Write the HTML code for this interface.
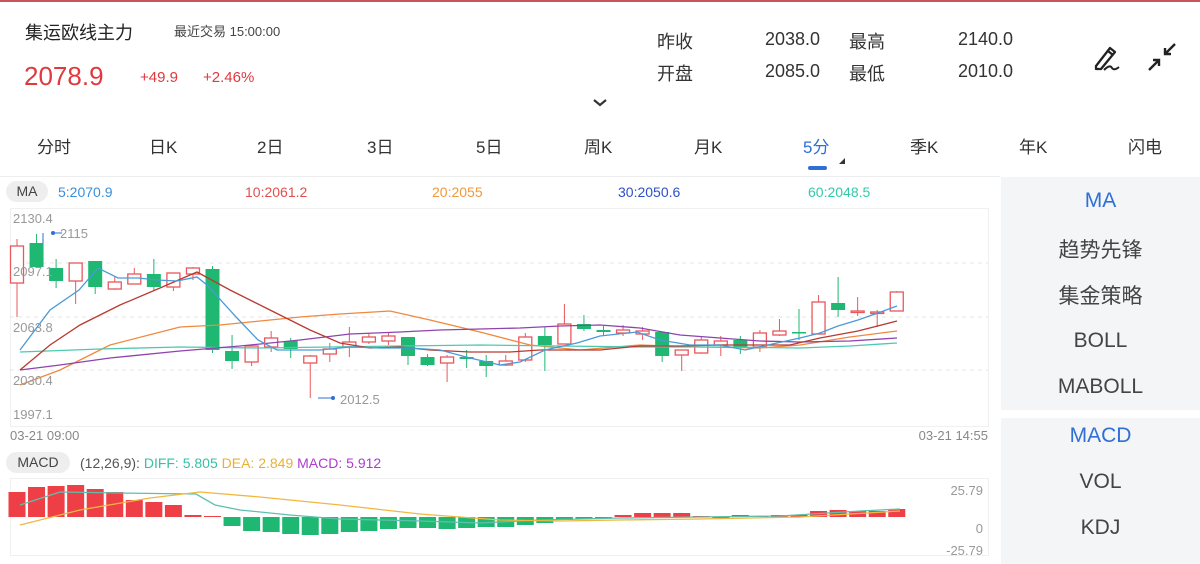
<!DOCTYPE html>
<html><head><meta charset="utf-8">
<style>
*{margin:0;padding:0;box-sizing:border-box}
body{width:1200px;height:564px;background:#fff;font-family:"Liberation Sans","Noto Sans CJK SC",sans-serif;position:relative;overflow:hidden;color:#333}
.a{position:absolute;white-space:nowrap}
.tab{position:absolute;top:133px;font-size:17px;color:#333}
.sb{position:absolute;left:1001px;width:199px;background:#f4f5f7}
.sb div{position:absolute;width:100%;text-align:center;font-size:21px;color:#444}
</style></head><body>
<div class="a" style="left:0;top:0;width:1200px;height:2px;background:#c9545a"></div>
<div class="a" style="left:25px;top:19px;font-size:18px;color:#222">集运欧线主力</div>
<div class="a" style="left:174px;top:21px;font-size:13px;color:#444">最近交易 15:00:00</div>
<div class="a" style="left:24px;top:61px;font-size:26px;color:#e0393e">2078.9</div>
<div class="a" style="left:140px;top:69px;font-size:15px;color:#e0393e">+49.9</div>
<div class="a" style="left:203px;top:69px;font-size:15px;color:#e0393e">+2.46%</div>
<div class="a" style="left:657px;top:28px;font-size:18px">昨收</div>
<div class="a" style="left:765px;top:29px;font-size:18px">2038.0</div>
<div class="a" style="left:849px;top:28px;font-size:18px">最高</div>
<div class="a" style="left:958px;top:29px;font-size:18px">2140.0</div>
<div class="a" style="left:657px;top:60px;font-size:18px">开盘</div>
<div class="a" style="left:765px;top:61px;font-size:18px">2085.0</div>
<div class="a" style="left:849px;top:60px;font-size:18px">最低</div>
<div class="a" style="left:958px;top:61px;font-size:18px">2010.0</div>
<svg class="a" style="left:592px;top:98px" width="16" height="10"><path d="M2 2 L8 7 L14 2" stroke="#333" stroke-width="2.2" fill="none"/></svg>
<svg class="a" style="left:1090px;top:40px" width="34" height="34"><path d="M6 26 L20 8 L25 12 L11 29 L6 29 Z M18 11 L23 15" stroke="#222" stroke-width="2.3" fill="none" stroke-linejoin="round"/><path d="M14 30 Q20 24 22 28 Q24 31 29 27" stroke="#222" stroke-width="2" fill="none"/></svg>
<svg class="a" style="left:1145px;top:40px" width="34" height="34"><path d="M4 30 L14 20 M8 20 L14 20 L14 26 M30 4 L20 14 M20 8 L20 14 L26 14" stroke="#222" stroke-width="2.4" fill="none"/></svg>

<div class="tab" style="left:37px">分时</div>
<div class="tab" style="left:149px">日K</div>
<div class="tab" style="left:257px">2日</div>
<div class="tab" style="left:367px">3日</div>
<div class="tab" style="left:476px">5日</div>
<div class="tab" style="left:584px">周K</div>
<div class="tab" style="left:694px">月K</div>
<div class="tab" style="left:803px;color:#2f6fd6">5分</div>
<div class="tab" style="left:910px">季K</div>
<div class="tab" style="left:1019px">年K</div>
<div class="tab" style="left:1128px">闪电</div>
<div class="a" style="left:808px;top:166px;width:19px;height:4px;border-radius:2px;background:#2f6fd6"></div>
<svg class="a" style="left:838px;top:157px" width="8" height="8"><path d="M7 1 L7 7 L1 7Z" fill="#333"/></svg>

<div class="a" style="left:0;top:176px;width:1000px;height:1px;background:#eee"></div>
<div class="a" style="left:6px;top:181px;width:42px;height:21px;border-radius:11px;background:#eee;font-size:14px;text-align:center;line-height:21px;color:#444">MA</div>
<div class="a" style="left:58px;top:184px;font-size:14px;color:#3b8fd9">5:2070.9</div>
<div class="a" style="left:245px;top:184px;font-size:14px;color:#e05050">10:2061.2</div>
<div class="a" style="left:432px;top:184px;font-size:14px;color:#ee9a3e">20:2055</div>
<div class="a" style="left:618px;top:184px;font-size:14px;color:#2c50c8">30:2050.6</div>
<div class="a" style="left:808px;top:184px;font-size:14px;color:#36c9a6">60:2048.5</div>

<svg id="k" class="a" style="left:0;top:0" width="1000" height="564">
<rect x="10.5" y="208.5" width="978" height="218" fill="none" stroke="#f0f0f0"/>
<g stroke="#e6e6e6" stroke-dasharray="4 4"><line x1="10" y1="263" x2="988" y2="263"/><line x1="10" y1="317" x2="988" y2="317"/><line x1="10" y1="370" x2="988" y2="370"/></g>
<rect x="10.5" y="478.5" width="978" height="77" fill="none" stroke="#f0f0f0"/>
<g id="cd"></g>
<path d="M53 233 L62 233 M43 233 L43 243" stroke="#2f6fd6" fill="none"/><circle cx="53" cy="233" r="2" fill="#2f6fd6"/>
<text x="60" y="238" font-size="13" fill="#999" font-family="Liberation Sans">2115</text>
<path d="M318 398 L333 398" stroke="#2f6fd6"/><circle cx="333" cy="398" r="2" fill="#2f6fd6"/>
<text x="340" y="404" font-size="13" fill="#999" font-family="Liberation Sans">2012.5</text>
<g id="ln" fill="none" stroke-width="1.3"></g>
<g font-size="13" fill="#999" font-family="Liberation Sans">
<text x="13" y="223">2130.4</text><text x="13" y="276">2097.1</text><text x="13" y="332">2063.8</text><text x="13" y="385">2030.4</text><text x="13" y="419">1997.1</text>
<text x="10" y="440" fill="#888">03-21 09:00</text><text x="988" y="440" text-anchor="end" fill="#888">03-21 14:55</text>
<text x="983" y="495" text-anchor="end">25.79</text><text x="983" y="533" text-anchor="end">0</text><text x="983" y="555" text-anchor="end">-25.79</text>
</g>
</svg>

<div class="a" style="left:6px;top:452px;width:64px;height:21px;border-radius:11px;background:#eee;font-size:14px;text-align:center;line-height:21px;color:#444">MACD</div>
<div class="a" style="left:80px;top:455px;font-size:14px;color:#555">(12,26,9): <span style="color:#36c0a8">DIFF: 5.805</span> <span style="color:#ecb030">DEA: 2.849</span> <span style="color:#b03ad0">MACD: 5.912</span></div>

<div class="sb" style="top:177px;height:233px">
<div style="top:12px;color:#2f6fd6">MA</div>
<div style="top:57px">趋势先锋</div>
<div style="top:103px">集金策略</div>
<div style="top:152px">BOLL</div>
<div style="top:198px">MABOLL</div>
</div>
<div class="sb" style="top:418px;height:146px">
<div style="top:6px;color:#2f6fd6">MACD</div>
<div style="top:52px">VOL</div>
<div style="top:98px">KDJ</div>
</div>

<script>
var C=[[246,283,239,317,1],[267,243,234,267,0],[268,281,259,288,0],[263,281,263,304,1],[261,287,261,294,0],[282,289,277,290,1],[274,284,268,284,1],[274,287,259,291,0],[273,287,273,291,1],[268,274,267,280,1],[269,350,266,353,0],[351,361,335,369,0],[346,362,346,366,1],[338,347,331,352,1],[341,349,338,358,0],[356,363,355,398,1],[349,354,343,362,1],[342,347,327,357,1],[337,342,333,344,1],[336,341,332,345,1],[337,356,337,365,0],[357,365,354,366,0],[357,363,355,382,1],[357,359,350,368,0],[361,366,355,377,0],[361,365,355,366,1],[337,360,333,362,1],[336,345,327,371,0],[324,344,304,344,1],[324,329,315,331,0],[330,332,326,336,0],[330,333,325,336,1],[331,334,327,340,1],[332,356,332,362,0],[350,355,350,371,1],[340,353,336,354,1],[341,345,336,356,1],[340,347,336,354,0],[333,347,330,352,1],[331,335,319,336,1],[332,333,309,340,0],[302,334,295,334,1],[303,310,277,317,0],[311,312,297,316,1],[312,313,310,327,1],[292,311,291,311,1]];
var s='',M=[492,487,486,485,489,492,500,502,505,515,516,526,531,532,534,535,534,532,531,529,528,528,529,528,527,527,525,523,520,519,518,515,513,513,513,516,517,515,516,515,515,511,510,511,511,509];
for(var i=0;i<C.length;i++){var x=17+i*19.55,c=C[i],r=c[4],col=r?'#e8585c':'#1fb872',t=Math.min(c[0],c[1]),b=Math.max(c[0],c[1]);
s+='<line x1="'+x+'" y1="'+c[2]+'" x2="'+x+'" y2="'+c[3]+'" stroke="'+col+'"/>';
if(r)s+='<rect x="'+(x-6.5)+'" y="'+t+'" width="13" height="'+Math.max(b-t,1.5)+'" fill="#fff" stroke="'+col+'" stroke-width="1.3"/>';
else s+='<rect x="'+(x-7)+'" y="'+t+'" width="14" height="'+Math.max(b-t,1.5)+'" fill="'+col+'"/>';
var m=M[i],mx=x-8.5;
if(m<=517)s+='<rect x="'+mx+'" y="'+m+'" width="17" height="'+Math.max(517-m,1)+'" fill="#ee3f46"/>';
else s+='<rect x="'+mx+'" y="517" width="17" height="'+(m-517)+'" fill="#1fb872"/>';}
document.getElementById('cd').innerHTML=s;
function P(a,c){return '<polyline stroke="'+c+'" points="'+a+'"/>'}
document.getElementById('ln').innerHTML=
P('20,385 60,370 110,345 180,327 220,325 300,317 340,314 390,311 430,320 480,332 530,345 580,350 640,345 700,347 760,348 800,345 850,337 897,331','#f0883e')+
P('20,352 100,349 180,347 260,348 330,347 400,346 480,345 560,346 640,347 720,347 800,348 850,346 897,343','#4ec9b0')+
P('20,370 60,365 110,358 180,351 240,346 300,340 350,334 400,332 440,330 480,329 520,328 560,326 600,325 640,328 680,335 720,338 760,341 800,342 850,341 897,338','#8e44ad')+
P('20,370 50,345 80,325 120,305 160,288 197,272 230,290 270,310 310,330 340,343 370,348 400,347 430,350 470,352 510,352 540,350 570,350 600,350 640,346 680,346 720,345 760,345 790,345 820,338 858,331 897,321','#b83a30')+
P('20,350 50,310 79,290 98,268 118,278 138,278 157,280 177,281 197,277 207,285 237,318 258,340 277,350 300,350 320,350 350,347 380,348 410,348 440,350 470,358 500,365 520,362 545,350 577,343 600,336 637,332 660,340 690,345 720,345 745,350 777,343 800,338 820,333 838,326 858,320 878,313 897,306','#4a9ad9')+
P('20,505 60,492 120,493 196,494 215,505 240,510 290,515 340,519 420,521 480,523 540,520 580,519 620,518 700,517 780,516 860,511 900,509','#5fbfae')+
P('20,525 80,510 150,498 200,492 260,497 340,505 420,514 500,520 560,521 620,520 700,519 800,517 900,511','#f0b840');
</script>
</body></html>
